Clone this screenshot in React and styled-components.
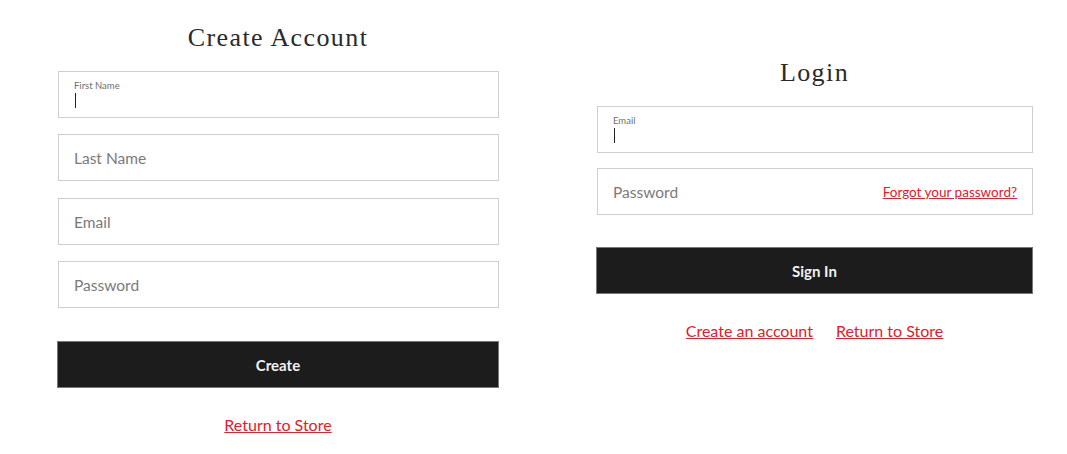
import React from 'react';
import styled, { createGlobalStyle } from 'styled-components';

const GlobalStyle = createGlobalStyle`
  body {
    margin: 0;
    background: #fff;
    font-family: Lato, "Open Sans", sans-serif;
  }
`;

const Page = styled.div`
  display: flex;
  align-items: flex-start;
  gap: 97px;
  padding-left: 57px;
  width: 1067px;
  height: 454px;
  box-sizing: border-box;
`;

const Column = styled.div`
  display: flex;
  flex-direction: column;
  width: ${p => p.width}px;
  padding-top: ${p => p.top}px;
`;

const Title = styled.h1`
  margin: 0 0 18px;
  height: 30px;
  line-height: 30px;
  text-align: center;
  font-family: "Liberation Serif", serif;
  font-weight: normal;
  font-size: 26px;
  color: #2a2a2a;
  letter-spacing: 1.4px;
`;

const Field = styled.div`
  position: relative;
  display: flex;
  align-items: center;
  justify-content: space-between;
  height: 47px;
  margin: 0 0 ${p => p.gap}px 1px;
  padding: 0 15px;
  border: 1px solid #cfcfcf;
  box-sizing: border-box;
`;

const Placeholder = styled.span`
  font-size: 15.5px;
  color: #7a7a7a;
`;

const FloatLabel = styled.span`
  position: absolute;
  left: 15px;
  top: 8px;
  font-size: 9.5px;
  color: #6f6f6f;
`;

const Caret = styled.span`
  position: absolute;
  left: 16px;
  top: 21px;
  width: 1px;
  height: 15px;
  background: #222;
`;

const Forgot = styled.a`
  font-size: 13.5px;
  color: #e0202a;
  text-decoration: underline;
  cursor: pointer;
`;

const Button = styled.button`
  height: 47px;
  margin: 0;
  background: #1c1c1c;
  border: 1px solid #777;
  color: #f2f2f2;
  font-family: Lato, sans-serif;
  font-weight: 700;
  font-size: 15px;
  cursor: pointer;
`;

const Links = styled.div`
  display: flex;
  justify-content: center;
  gap: 23px;
  margin-top: 28px;
`;

const TextLink = styled.a`
  font-size: 16px;
  line-height: 18px;
  color: #e0202a;
  text-decoration: underline;
  cursor: pointer;
`;

const FocusedField = ({ label, gap }) => (
  <Field gap={gap}>
    <FloatLabel>{label}</FloatLabel>
    <Caret />
  </Field>
);

const App = () => (
  <>
    <GlobalStyle />
    <Page>
      <Column width={442} top={23}>
        <Title>Create Account</Title>
        <FocusedField label="First Name" gap={16} />
        <Field gap={17}><Placeholder>Last Name</Placeholder></Field>
        <Field gap={16}><Placeholder>Email</Placeholder></Field>
        <Field gap={33}><Placeholder>Password</Placeholder></Field>
        <Button>Create</Button>
        <Links>
          <TextLink>Return to Store</TextLink>
        </Links>
      </Column>
      <Column width={437} top={58}>
        <Title>Login</Title>
        <FocusedField label="Email" gap={15} />
        <Field gap={32}>
          <Placeholder>Password</Placeholder>
          <Forgot>Forgot your password?</Forgot>
        </Field>
        <Button>Sign In</Button>
        <Links>
          <TextLink>Create an account</TextLink>
          <TextLink>Return to Store</TextLink>
        </Links>
      </Column>
    </Page>
  </>
);

export default App;
